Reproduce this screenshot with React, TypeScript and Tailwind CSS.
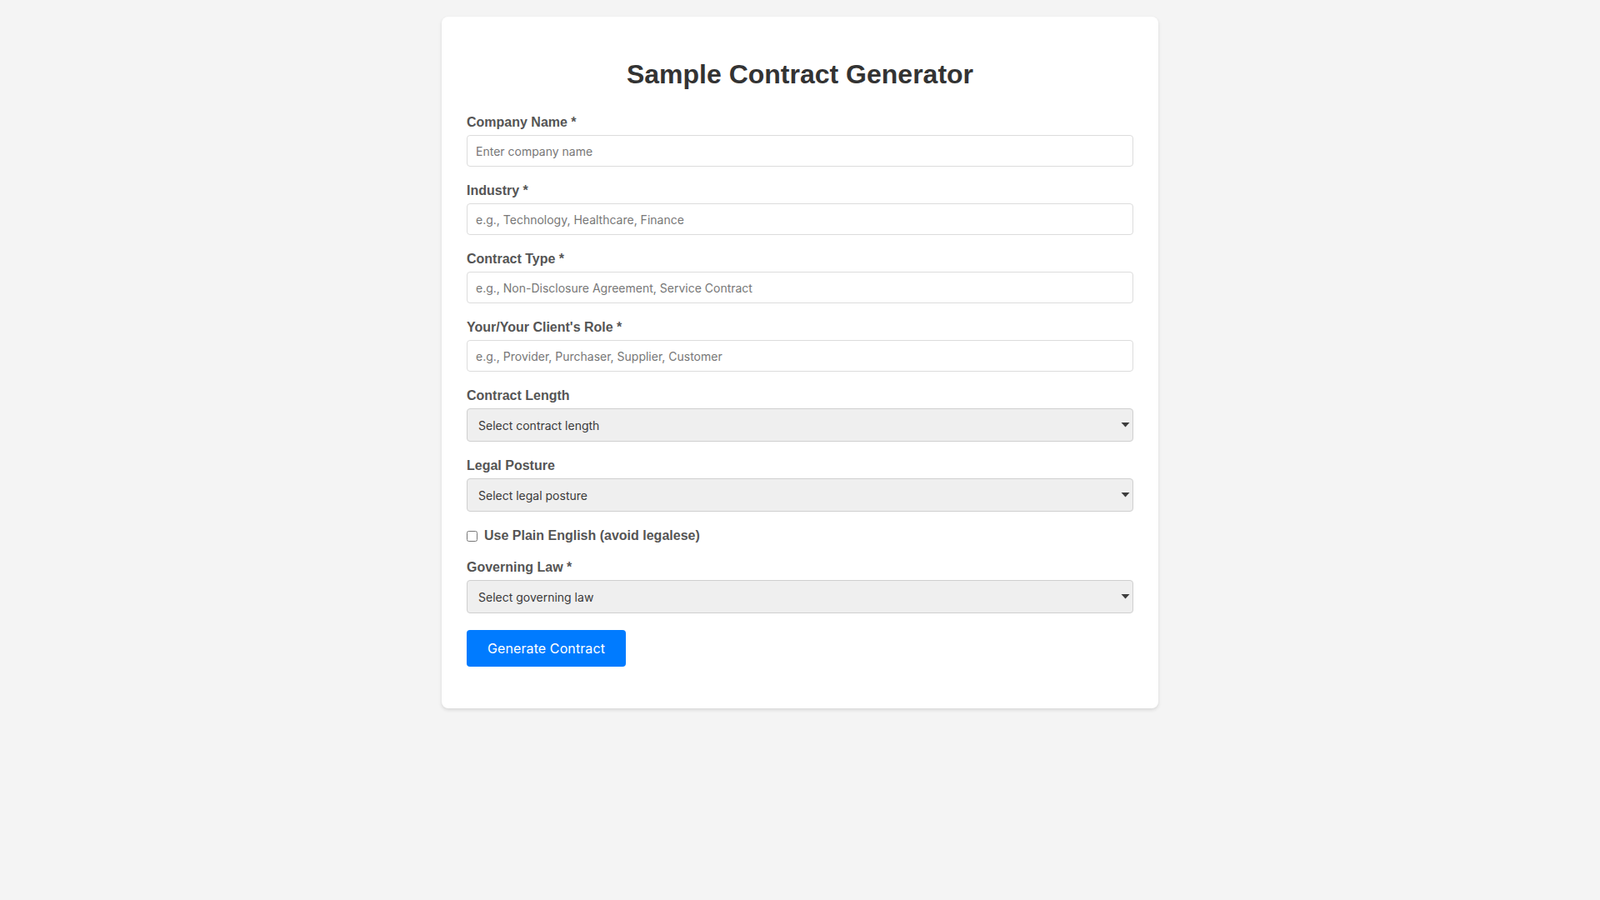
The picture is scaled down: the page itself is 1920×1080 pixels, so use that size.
import { useState } from 'react'

const textFields = [
  { id: 'company', label: 'Company Name *', placeholder: 'Enter company name' },
  { id: 'industry', label: 'Industry *', placeholder: 'e.g., Technology, Healthcare, Finance' },
  { id: 'type', label: 'Contract Type *', placeholder: 'e.g., Non-Disclosure Agreement, Service Contract' },
  { id: 'role', label: "Your/Your Client's Role *", placeholder: 'e.g., Provider, Purchaser, Supplier, Customer' },
]

function FieldLabel({ htmlFor, children }: { htmlFor: string; children: React.ReactNode }) {
  return (
    <label
      htmlFor={htmlFor}
      className="mb-[6px] block font-['Liberation_Sans',Arial,sans-serif] text-[16px] leading-[18px] font-bold text-[#555]"
    >
      {children}
    </label>
  )
}

function SelectField({ id, label, placeholder, options }: { id: string; label: string; placeholder: string; options: string[] }) {
  return (
    <div className="mb-5">
      <FieldLabel htmlFor={id}>{label}</FieldLabel>
      <div className="relative">
        <select
          id={id}
          defaultValue=""
          className="block h-[40px] w-full appearance-none rounded-[4px] border border-[#cfcfcf] bg-[#efefef] pl-[13px] pr-8 font-['Inter',sans-serif] text-[14px] text-[#3a3a3a] outline-none"
        >
          <option value="" disabled>
            {placeholder}
          </option>
          {options.map(o => (
            <option key={o} value={o}>
              {o}
            </option>
          ))}
        </select>
        <svg
          className="pointer-events-none absolute top-1/2 right-[3px] -translate-y-1/2"
          width="13"
          height="7"
          viewBox="0 0 13 7"
        >
          <path d="M1.5 0.5 L11.5 0.5 L6.5 6 Z" fill="#3d3d3d" />
        </svg>
      </div>
    </div>
  )
}

export default function App() {
  const [plain, setPlain] = useState(false)

  return (
    <div className="min-h-screen bg-[#f4f4f4] pt-5">
      <div className="mx-auto w-[860px] rounded-[8px] bg-white p-[30px] shadow-[0_2px_4px_rgba(0,0,0,0.12)]">
        <h1 className="mt-[21px] mb-[30px] text-center font-['Liberation_Sans',Arial,sans-serif] text-[32px] leading-[37px] font-bold text-[#333]">
          Sample Contract Generator
        </h1>

        <form onSubmit={e => e.preventDefault()}>
          {textFields.map(f => (
            <div key={f.id} className="mb-5">
              <FieldLabel htmlFor={f.id}>{f.label}</FieldLabel>
              <input
                id={f.id}
                type="text"
                placeholder={f.placeholder}
                className="block h-[38px] w-full rounded-[4px] border border-[#dcdcdc] bg-white px-[10px] font-['Inter',sans-serif] text-[14px] text-[#333] outline-none placeholder:text-[#777]"
              />
            </div>
          ))}

          <SelectField
            id="length"
            label="Contract Length"
            placeholder="Select contract length"
            options={['1 year', '2 years', '3 years', '5 years']}
          />
          <SelectField
            id="posture"
            label="Legal Posture"
            placeholder="Select legal posture"
            options={['Neutral', 'Favorable to me', 'Favorable to other party']}
          />

          <div className="mb-5 flex h-[18px] items-center">
            <input
              id="plain"
              type="checkbox"
              checked={plain}
              onChange={e => setPlain(e.target.checked)}
              className="m-0 h-[13px] w-[13px]"
            />
            <label
              htmlFor="plain"
              className="ml-[8px] font-['Liberation_Sans',Arial,sans-serif] text-[16px] leading-[18px] font-bold text-[#555]"
            >
              Use Plain English (avoid legalese)
            </label>
          </div>

          <SelectField
            id="law"
            label="Governing Law *"
            placeholder="Select governing law"
            options={['California', 'Delaware', 'New York', 'Texas']}
          />

          <button
            type="submit"
            className="mb-5 h-[44px] rounded-[4px] bg-[#007bff] px-[25px] font-['Inter',sans-serif] text-[16px] tracking-[0.1px] text-white"
          >
            Generate Contract
          </button>
        </form>
      </div>
    </div>
  )
}
